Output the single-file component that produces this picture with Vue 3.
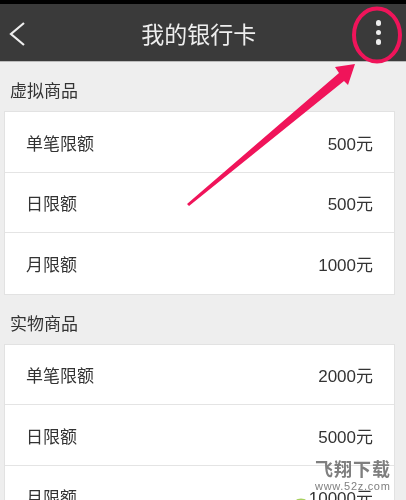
<template>
  <div class="page">
    <div class="statusbar"></div>
    <header class="topbar">
      <svg class="back" width="16" height="28" viewBox="0 0 16 28" fill="none" stroke="#eee" stroke-width="2.2"><polyline points="15,3 2,14 15,25"/></svg>
      <div class="title">我的银行卡</div>
      <div class="more"><i></i><i></i><i></i></div>
    </header>

    <section v-for="s in sections" :key="s.name">
      <div class="sec-title">{{ s.name }}</div>
      <div class="card">
        <div v-for="r in s.rows" :key="r[0]" class="row">
          <span>{{ r[0] }}</span>
          <span>{{ r[1] }}</span>
        </div>
      </div>
    </section>

    <!-- red annotation drawn over the screenshot -->
    <svg class="mark" width="406" height="500" viewBox="0 0 406 500">
      <ellipse cx="377" cy="35" rx="23" ry="26.5" fill="none" stroke="#f0145a" stroke-width="4"/>
      <polygon points="187,204 339,73 335,67 355,64 348,85 344,81 189,206" fill="#f0145a"/>
      <ellipse cx="301" cy="501" rx="5" ry="2.5" fill="#a8d060"/>
    </svg>

    <div class="wm">
      <div class="wm-name">飞翔下载</div>
      <div class="wm-url">www.52z.com</div>
    </div>
  </div>
</template>

<script setup>
const sections = [
  { name: '虚拟商品', rows: [['单笔限额', '500元'], ['日限额', '500元'], ['月限额', '1000元']] },
  { name: '实物商品', rows: [['单笔限额', '2000元'], ['日限额', '5000元'], ['月限额', '10000元']] },
]
</script>

<style>
html, body { margin: 0; overflow: hidden; }
</style>

<style scoped>
.page { position: relative; width: 406px; height: 500px; overflow: hidden; background: #eeeeee; font-family: "Liberation Sans", "Noto Sans CJK SC", sans-serif; color: #333; filter: blur(0.4px); }
.statusbar { height: 4px; background: #000; }
.topbar { height: 58px; background: #3a3a3a; border-bottom: 1px solid #bbb; box-sizing: border-box; display: flex; align-items: center; justify-content: space-between; padding: 0 25px 0 9px; }
.back { flex-shrink: 0; margin-top: 2px; }
.title { color: #eee; font-size: 23px; margin-right: 3px; }
.more { display: flex; flex-direction: column; gap: 4px; }
.more i { display: block; width: 5.5px; height: 5.5px; border-radius: 50%; background: #eee; }
.sec-title { height: 49px; box-sizing: border-box; padding: 18px 0 0 10px; font-size: 17px; line-height: 24px; color: #333; }
.card { width: 391px; margin-left: 4px; background: #fff; box-sizing: border-box; border: 1px solid #e2e2e2; }
.row { height: 60.5px; box-sizing: border-box; display: flex; align-items: center; justify-content: space-between; padding: 1px 21px 0; font-size: 17px; color: #333; border-bottom: 1px solid #e4e4e4; }
.row:last-child { border-bottom: 0; }
.mark { position: absolute; left: 0; top: 0; }
.wm { position: absolute; left: 315px; top: 460px; width: 76px; color: #7f7f7f; }
.wm-name { font-size: 18px; line-height: 21px; font-weight: 700; letter-spacing: 1px; white-space: nowrap; }
.wm-url { font-size: 11px; line-height: 11px; letter-spacing: 0.7px; white-space: nowrap; }
</style>
